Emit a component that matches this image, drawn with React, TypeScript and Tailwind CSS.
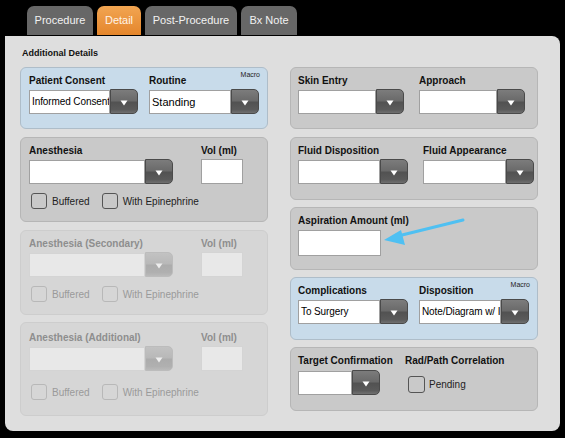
import React from "react";

const Arrow = ({ disabled }: { disabled?: boolean }) => (
  <svg width="8" height="6" viewBox="0 0 8 6" className="mt-[2px]">
    <path d="M0.5 0.5 L7.5 0.5 L4 5.5 Z" fill={disabled ? "#eeeeee" : "#ffffff"} />
  </svg>
);

const Select = ({
  w,
  text,
  disabled,
  small,
}: {
  w: string;
  text?: string;
  disabled?: boolean;
  small?: boolean;
}) => (
  <div className={`flex h-[25px] ${w}`}>
    <div
      className={
        disabled
          ? "flex-1 min-w-0 h-[24px] mt-[1px] bg-[#e8e8e8] border border-[#d4d4d4] overflow-hidden"
          : "flex-1 min-w-0 h-[24px] mt-[1px] bg-white border border-[#a0a0a0] overflow-hidden"
      }
    >
      <div
        className={`pl-[2px] leading-[22px] text-black whitespace-nowrap ${
          small ? "text-[10px] tracking-[-0.1px]" : "text-[11px]"
        }`}
      >
        {text}
      </div>
    </div>
    <div
      className={
        disabled
          ? "w-[28px] h-[25px] rounded-r-[5px] border border-[#bcbcbc] bg-[linear-gradient(to_bottom,#c2c2c2_0%,#b8b8b8_48%,#acacac_52%,#b0b0b0_85%,#bababa_100%)] flex items-center justify-center"
          : "w-[28px] h-[25px] rounded-r-[5px] border border-[#4a4a4a] bg-[linear-gradient(to_bottom,#7c7c7c_0%,#6a6a6a_46%,#525252_54%,#5a5a5a_85%,#707070_100%)] flex items-center justify-center"
      }
    >
      <Arrow disabled={disabled} />
    </div>
  </div>
);

const Label = ({ children, disabled }: { children: React.ReactNode; disabled?: boolean }) => (
  <div
    className={`text-[10px] leading-[13px] font-bold whitespace-nowrap ${
      disabled ? "text-[#8e8e8e]" : "text-[#111]"
    }`}
  >
    {children}
  </div>
);

const Check = ({ label, disabled }: { label: string; disabled?: boolean }) => (
  <div className="flex items-center">
    <div
      className={`w-[16px] h-[16px] rounded-[3px] border-[1.5px] ${
        disabled ? "border-[#b8b8b8]" : "border-[#555]"
      }`}
    />
    <span
      className={`ml-[5px] text-[10px] leading-[13px] ${
        disabled ? "text-[#9a9a9a]" : "text-[#222]"
      }`}
    >
      {label}
    </span>
  </div>
);

const Vol = ({ disabled }: { disabled?: boolean }) => (
  <div
    className={`w-[42px] h-[25px] ${
      disabled ? "bg-[#e8e8e8] border border-[#d4d4d4]" : "bg-white border border-[#a0a0a0]"
    }`}
  />
);

const GrayBox = ({
  children,
  h,
  disabled,
  blue,
  pt = "pt-[6px]",
  pl = "pl-[8px]",
}: {
  children: React.ReactNode;
  h: string;
  disabled?: boolean;
  blue?: boolean;
  pt?: string;
  pl?: string;
}) => (
  <div
    className={`relative ${h} ${pt} ${pl} rounded-[6px] border ${
      blue
        ? "bg-[#c8dbea] border-[#aebdc9]"
        : disabled
        ? "bg-[#d6d6d6] border-[#cdcdcd]"
        : "bg-[#c9c9c9] border-[#b6b6b6]"
    }`}
  >
    {children}
  </div>
);

const Macro = () => (
  <div className="absolute right-[7px] top-[3px] text-[7px] leading-[8px] text-[#222]">Macro</div>
);

const AnesBox = ({
  title,
  disabled,
  h,
  pt,
  checkMt,
}: {
  title: string;
  disabled?: boolean;
  h: string;
  pt: string;
  checkMt: string;
}) => (
  <GrayBox h={h} disabled={disabled} pt={pt}>
    <div className="flex">
      <div className="w-[144px]">
        <Label disabled={disabled}>{title}</Label>
        <div className="mt-[2px]">
          <Select w="w-[144px]" disabled={disabled} />
        </div>
      </div>
      <div className="ml-[28px]">
        <Label disabled={disabled}>Vol (ml)</Label>
        <div className="mt-[2px]">
          <Vol disabled={disabled} />
        </div>
      </div>
    </div>
    <div className={`flex ${checkMt} ml-[2px] gap-[12px]`}>
      <Check label="Buffered" disabled={disabled} />
      <Check label="With Epinephrine" disabled={disabled} />
    </div>
  </GrayBox>
);

const Tab = ({ label, active, w }: { label: string; active?: boolean; w: string }) => (
  <div
    className={`${w} h-[29px] rounded-t-[7px] flex items-center justify-center text-[11px] ${
      active
        ? "bg-[linear-gradient(to_bottom,#f2a552,#e4862c)] text-[#fff4e8]"
        : "bg-[#676767] text-[#f2f2f2]"
    }`}
  >
    {label}
  </div>
);

export default function App() {
  return (
    <div className="relative w-[565px] h-[438px] bg-black overflow-hidden font-['Liberation_Sans',Arial,sans-serif]">
      <div className="flex gap-[4px] pl-[27px] pt-[6px]">
        <Tab label="Procedure" w="w-[66px]" />
        <Tab label="Detail" active w="w-[44px]" />
        <Tab label="Post-Procedure" w="w-[92px]" />
        <Tab label="Bx Note" w="w-[56px]" />
      </div>
      <div className="ml-[5px] mt-[1px] w-[555px] h-[395px] bg-[#dedede] rounded-tr-[8px] rounded-b-[8px] pt-[10px] pl-[15px]">
        <div className="text-[9px] leading-[14px] font-bold text-[#111] ml-[2px]">
          Additional Details
        </div>
        <div className="mt-[7px] flex gap-[22px]">
          {/* left column */}
          <div className="w-[248px] flex flex-col">
            <GrayBox h="h-[62px]" blue>
              <Macro />
              <div className="flex gap-[11px]">
                <div>
                  <Label>Patient Consent</Label>
                  <div className="mt-[2px]">
                    <Select w="w-[109px]" text="Informed Consent" small />
                  </div>
                </div>
                <div>
                  <Label>Routine</Label>
                  <div className="mt-[2px]">
                    <Select w="w-[110px]" text="Standing" />
                  </div>
                </div>
              </div>
            </GrayBox>
            <div className="mt-[8px]">
              <AnesBox title="Anesthesia" h="h-[85px]" pt="pt-[6px]" checkMt="mt-[9px]" />
            </div>
            <div className="mt-[8px]">
              <AnesBox
                title="Anesthesia (Secondary)"
                disabled
                h="h-[85px]"
                pt="pt-[6px]"
                checkMt="mt-[9px]"
              />
            </div>
            <div className="mt-[7px]">
              <AnesBox
                title="Anesthesia (Additional)"
                disabled
                h="h-[94px]"
                pt="pt-[8px]"
                checkMt="mt-[13px]"
              />
            </div>
          </div>
          {/* right column */}
          <div className="w-[248px] flex flex-col">
            <GrayBox h="h-[62px]" pl="pl-[7px]">
              <div className="flex gap-[15px]">
                <div>
                  <Label>Skin Entry</Label>
                  <div className="mt-[2px]">
                    <Select w="w-[106px]" />
                  </div>
                </div>
                <div>
                  <Label>Approach</Label>
                  <div className="mt-[2px]">
                    <Select w="w-[106px]" />
                  </div>
                </div>
              </div>
            </GrayBox>
            <div className="mt-[8px]">
              <GrayBox h="h-[63px]" pl="pl-[7px]">
                <div className="flex gap-[15px]">
                  <div>
                    <Label>Fluid Disposition</Label>
                    <div className="mt-[2px]">
                      <Select w="w-[110px]" />
                    </div>
                  </div>
                  <div>
                    <Label>Fluid Appearance</Label>
                    <div className="mt-[2px]">
                      <Select w="w-[111px]" />
                    </div>
                  </div>
                </div>
              </GrayBox>
            </div>
            <div className="mt-[7px]">
              <GrayBox h="h-[63px]" pl="pl-[7px]">
                <Label>Aspiration Amount (ml)</Label>
                <div className="mt-[3px] w-[83px] h-[26px] bg-white border border-[#a0a0a0]" />
              </GrayBox>
            </div>
            <div className="mt-[7px]">
              <GrayBox h="h-[63px]" blue pl="pl-[7px]">
                <Macro />
                <div className="flex gap-[11px]">
                  <div>
                    <Label>Complications</Label>
                    <div className="mt-[2px]">
                      <Select w="w-[110px]" text="To Surgery" small />
                    </div>
                  </div>
                  <div>
                    <Label>Disposition</Label>
                    <div className="mt-[2px]">
                      <Select w="w-[110px]" text="Note/Diagram w/ Images" small />
                    </div>
                  </div>
                </div>
              </GrayBox>
            </div>
            <div className="mt-[7px]">
              <GrayBox h="h-[64px]" pl="pl-[7px]">
                <div className="flex gap-[15px]">
                  <div className="w-[92px]">
                    <Label>Target Confirmation</Label>
                    <div className="mt-[3px]">
                      <Select w="w-[82px]" />
                    </div>
                  </div>
                  <div>
                    <Label>Rad/Path Correlation</Label>
                    <div className="mt-[9px] ml-[3px] flex items-center">
                      <div className="w-[17px] h-[17px] rounded-[3px] border-[1.5px] border-[#555]" />
                      <span className="ml-[4px] text-[10px] leading-[13px] text-[#222]">Pending</span>
                    </div>
                  </div>
                </div>
              </GrayBox>
            </div>
          </div>
        </div>
      </div>
      {/* annotation arrow */}
      <svg
        className="absolute left-0 top-0 pointer-events-none"
        width="565"
        height="438"
        viewBox="0 0 565 438"
      >
        <line x1="463" y1="220" x2="398" y2="236" stroke="#4fc0f2" strokeWidth="3" strokeLinecap="round" />
        <path d="M384 240 L401 230 L405 245 Z" fill="#4fc0f2" />
      </svg>
    </div>
  );
}
